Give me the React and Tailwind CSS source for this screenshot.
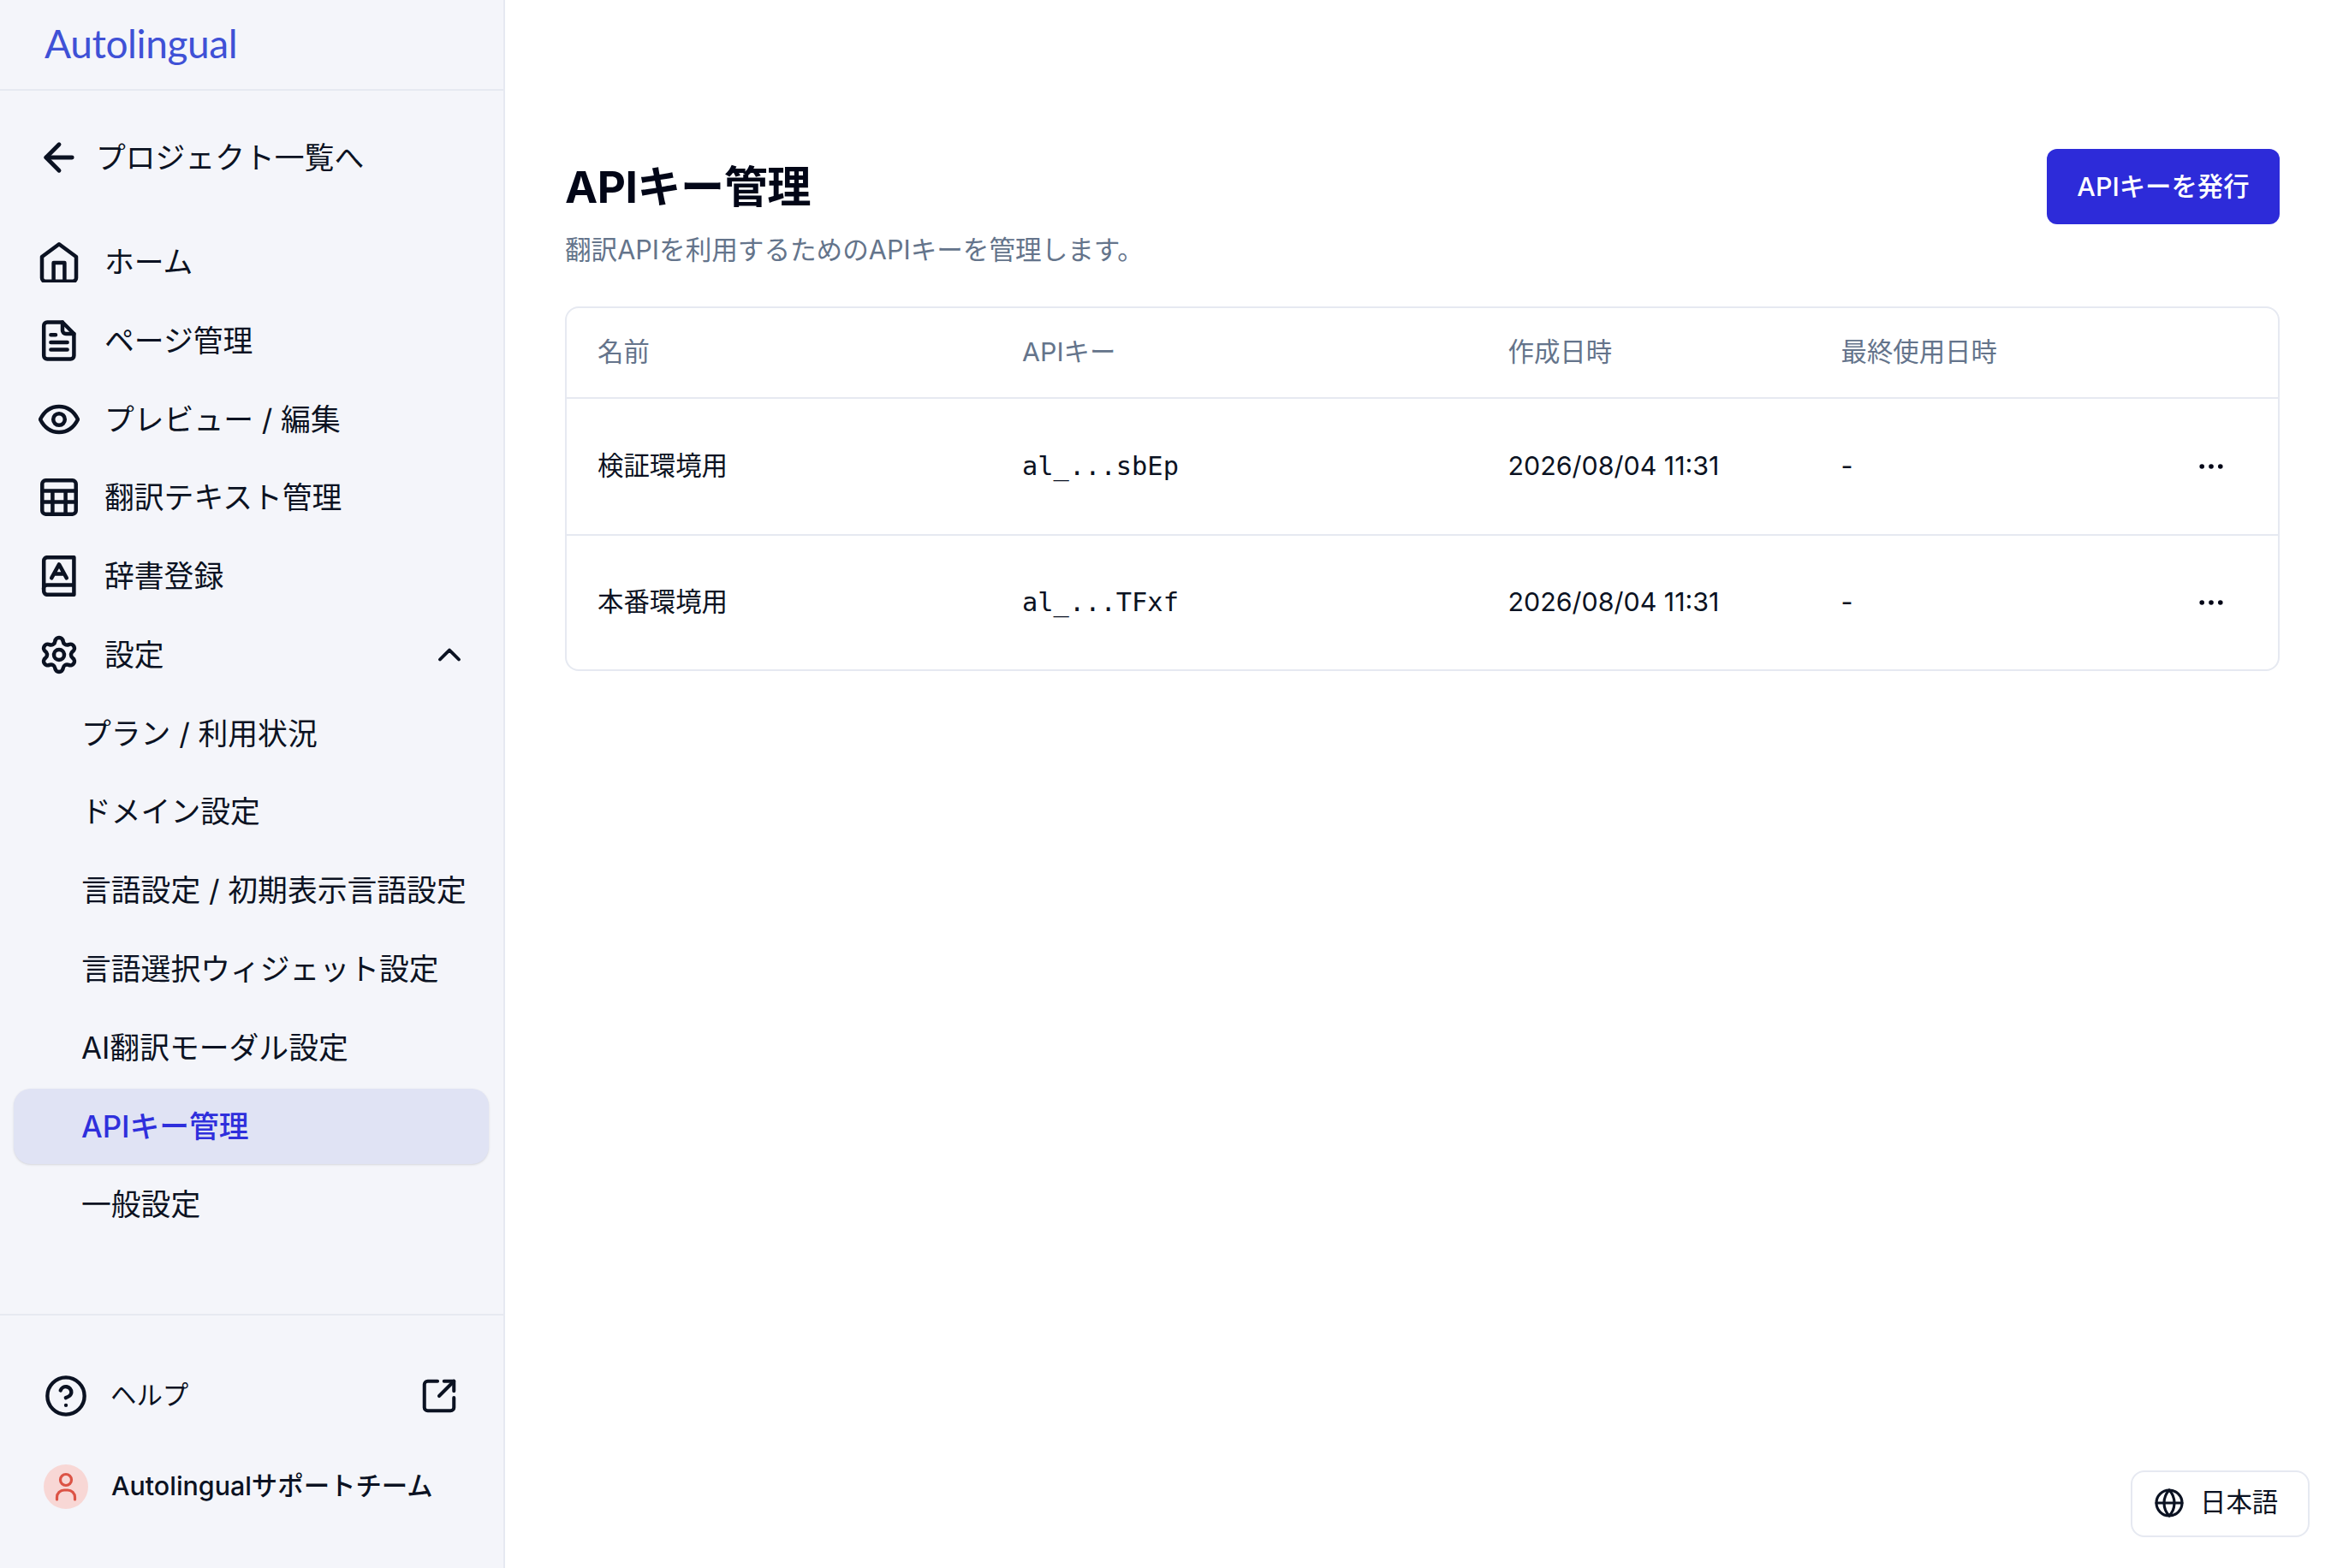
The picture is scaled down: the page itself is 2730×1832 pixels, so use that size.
import React from "react";
import { ArrowLeft, ChevronUp, Settings, CircleHelp, SquareArrowOutUpRight, Globe } from "lucide-react";

const svgProps = { width: 48, height: 48, viewBox: "0 0 24 24", fill: "none", stroke: "currentColor", strokeWidth: 2.25, strokeLinecap: "round", strokeLinejoin: "round", className: "shrink-0" };

const HomeIcon = () => (
  <svg {...svgProps}>
    <path d="M12 1.6 22 9v12.4a2 2 0 0 1-2 2H4a2 2 0 0 1-2-2V9Z" />
    <path d="M8.8 23.2V12.5h6.4v10.7" />
  </svg>
);
const DocIcon = () => (
  <svg {...svgProps}>
    <path d="M5.1 1.25H14l6.7 6.75v12.75a2 2 0 0 1-2 2H5.1a2 2 0 0 1-2-2V3.25a2 2 0 0 1 2-2Z" />
    <path d="M14 1.25V6a2 2 0 0 0 2 2h4.7" />
    <path d="M7.2 8.6h2.8M7.2 13h9.6M7.2 17.3h9.6" />
  </svg>
);
const EyeIcon = () => (
  <svg {...svgProps}>
    <path d="M1 12C3.5 7 7.5 4.5 12 4.5S20.5 7 23 12c-2.5 5-6.5 7.5-11 7.5S3.5 17 1 12Z" />
    <circle cx="12" cy="12" r="3.4" />
  </svg>
);
const TableIcon = () => (
  <svg {...svgProps}>
    <rect x="2.15" y="2.15" width="19.7" height="19.7" rx="2" />
    <path d="M2.15 8.2h19.7M2.15 14.8h19.7M8.2 8.2v13.6M15.8 8.2v13.6" />
  </svg>
);
const BookIcon = () => (
  <svg {...svgProps}>
    <path d="M20.7 17.3V1.1H5.1a2 2 0 0 0-2 2v17.8a2 2 0 0 0 2 2h15.6v-5.6H5.1a2 2 0 0 0-2 2.6" />
    <path d="M7.6 13.2 12 5.2l4.4 8M9.2 10.8h5.6" />
  </svg>
);
const AvatarIcon = () => (
  <svg width="52" height="52" viewBox="0 0 52 52" fill="none" stroke="#dc5345" strokeWidth="3.2" strokeLinecap="round">
    <circle cx="26" cy="18" r="6.5" />
    <path d="M15.5 41v-2.5A8.5 8.5 0 0 1 24 30h4a8.5 8.5 0 0 1 8.5 8.5V41" />
  </svg>
);
const DotsIcon = () => (
  <svg width="28" height="8" viewBox="0 0 28 8" fill="#020617">
    <circle cx="3.2" cy="4" r="2.8" />
    <circle cx="14" cy="4" r="2.8" />
    <circle cx="24.8" cy="4" r="2.8" />
  </svg>
);

const mainNav = [
  ["ホーム", <HomeIcon />],
  ["ページ管理", <DocIcon />],
  ["プレビュー / 編集", <EyeIcon />],
  ["翻訳テキスト管理", <TableIcon />],
  ["辞書登録", <BookIcon />],
];
const subNav = ["プラン / 利用状況", "ドメイン設定", "言語設定 / 初期表示言語設定", "言語選択ウィジェット設定", "AI翻訳モーダル設定", "APIキー管理", "一般設定"];
const rows = [
  ["検証環境用", "al_...sbEp"],
  ["本番環境用", "al_...TFxf"],
];

export default function App() {
  return (
    <div className="relative flex h-[1832px] w-full overflow-hidden bg-white font-['Inter','Noto_Sans_CJK_JP',sans-serif] text-[#0b1222]">
      <aside className="flex w-[590px] shrink-0 flex-col border-r-2 border-[#e6e9f1] bg-[#f4f5fa]">
        <div className="flex h-[106px] shrink-0 items-center border-b-2 border-[#e6e9f1] pb-[3px] pl-[52px]">
          <span className="font-['Lato',sans-serif] text-[46px] leading-none tracking-[-0.4px] text-[#3f51d6]">Autolingual</span>
        </div>
        <div className="mt-[34px] flex h-[88px] shrink-0 items-center gap-[17px] pl-[43px]">
          <ArrowLeft size={52} strokeWidth={2.25} />
          <span className="text-[34.8px]">プロジェクト一覧へ</span>
        </div>
        <nav className="mt-[34px] flex flex-col gap-[3.8px] pl-4 pr-[17px]">
          {mainNav.map(([label, icon]) => (
            <div key={label} className="flex h-[88px] items-center gap-[29px] pl-[29px]">
              {icon}
              <span className="text-[34.8px]">{label}</span>
            </div>
          ))}
          <div className="flex h-[88px] items-center gap-[29px] pl-[29px] pr-[24px]">
            <Settings size={48} strokeWidth={2.25} className="shrink-0" />
            <span className="flex-1 text-[34.8px]">設定</span>
            <ChevronUp size={44} strokeWidth={2.1} />
          </div>
          {subNav.map((label) => {
            const active = label === "APIキー管理";
            return (
              <div
                key={label}
                className={active
                  ? "flex h-[88px] items-center rounded-[20px] bg-[#e0e3f4] pl-[79px] text-[34.8px] font-medium text-[#2f2fdc] shadow-sm"
                  : "flex h-[88px] items-center pl-[79px] text-[34.8px]"}
              >
                {label}
              </div>
            );
          })}
        </nav>
        <div className="mt-auto h-[297px] shrink-0 border-t-2 border-[#e6e9f1] pl-[51px] pr-[52px]">
          <div className="mt-[68px] flex h-[52px] items-center gap-[26px]">
            <CircleHelp size={52} strokeWidth={2} className="shrink-0" />
            <span className="flex-1 text-[30.4px]">ヘルプ</span>
            <SquareArrowOutUpRight size={46} strokeWidth={2.1} />
          </div>
          <div className="mt-[54px] flex h-[52px] items-center gap-[27px]">
            <div className="h-[52px] w-[52px] shrink-0 rounded-full bg-[#f8d7d5]">
              <AvatarIcon />
            </div>
            <span className="text-[30.4px] font-medium">Autolingualサポートチーム</span>
          </div>
        </div>
      </aside>

      <main className="min-w-0 flex-1 pl-[70px] pr-[67px] pt-[174px]">
        <div className="flex items-start justify-between">
          <div>
            <h1 className="text-[51.2px] font-bold leading-[88px] tracking-[-0.5px] text-[#020617]">APIキー管理</h1>
            <p className="mt-[8px] text-[30.6px] leading-[44px] text-[#64748b]">翻訳APIを利用するためのAPIキーを管理します。</p>
          </div>
          <button className="flex h-[88px] w-[272px] items-center justify-center rounded-[12px] bg-[#2d2bd9] pt-[2px] text-[30.4px] font-medium text-white">
            APIキーを発行
          </button>
        </div>
        <div className="mt-[44px] overflow-hidden rounded-[16px] border-2 border-[#e6e9f1]">
          <table className="w-full table-fixed text-left">
            <thead>
              <tr className="h-[105px] border-b-2 border-[#e6e9f1] text-[#64748b]">
                <th className="w-[496px] pl-[36px] text-[30.4px] font-normal">名前</th>
                <th className="w-[567.5px] pl-[36px] text-[30.4px] font-normal">APIキー</th>
                <th className="w-[389px] pl-[36px] text-[30.4px] font-normal">作成日時</th>
                <th className="pl-[36px] text-[30.4px] font-normal">最終使用日時</th>
                <th className="w-[172px]" />
              </tr>
            </thead>
            <tbody>
              {rows.map(([name, key], i) => (
                <tr key={name} className={i === 0 ? "h-[160px] border-b-2 border-[#e6e9f1]" : "h-[157px]"}>
                  <td className="pl-[36px] text-[30.4px]">{name}</td>
                  <td className="pl-[36px] font-['DejaVu_Sans_Mono',monospace] text-[30.4px]">{key}</td>
                  <td className="pl-[36px] text-[30.4px]">2026/08/04 11:31</td>
                  <td className="pl-[36px] text-[30.4px]">-</td>
                  <td className="pl-[80px]">
                    <DotsIcon />
                  </td>
                </tr>
              ))}
            </tbody>
          </table>
        </div>
      </main>

      <button className="absolute left-[2489px] top-[1718px] flex h-[78px] w-[209px] items-center justify-start gap-[18px] rounded-[16px] border-2 border-[#e6e9f1] bg-white pb-[2px] pl-[25px] text-[30.4px]">
        <Globe size={36} strokeWidth={2.1} />
        <span>日本語</span>
      </button>
    </div>
  );
}
